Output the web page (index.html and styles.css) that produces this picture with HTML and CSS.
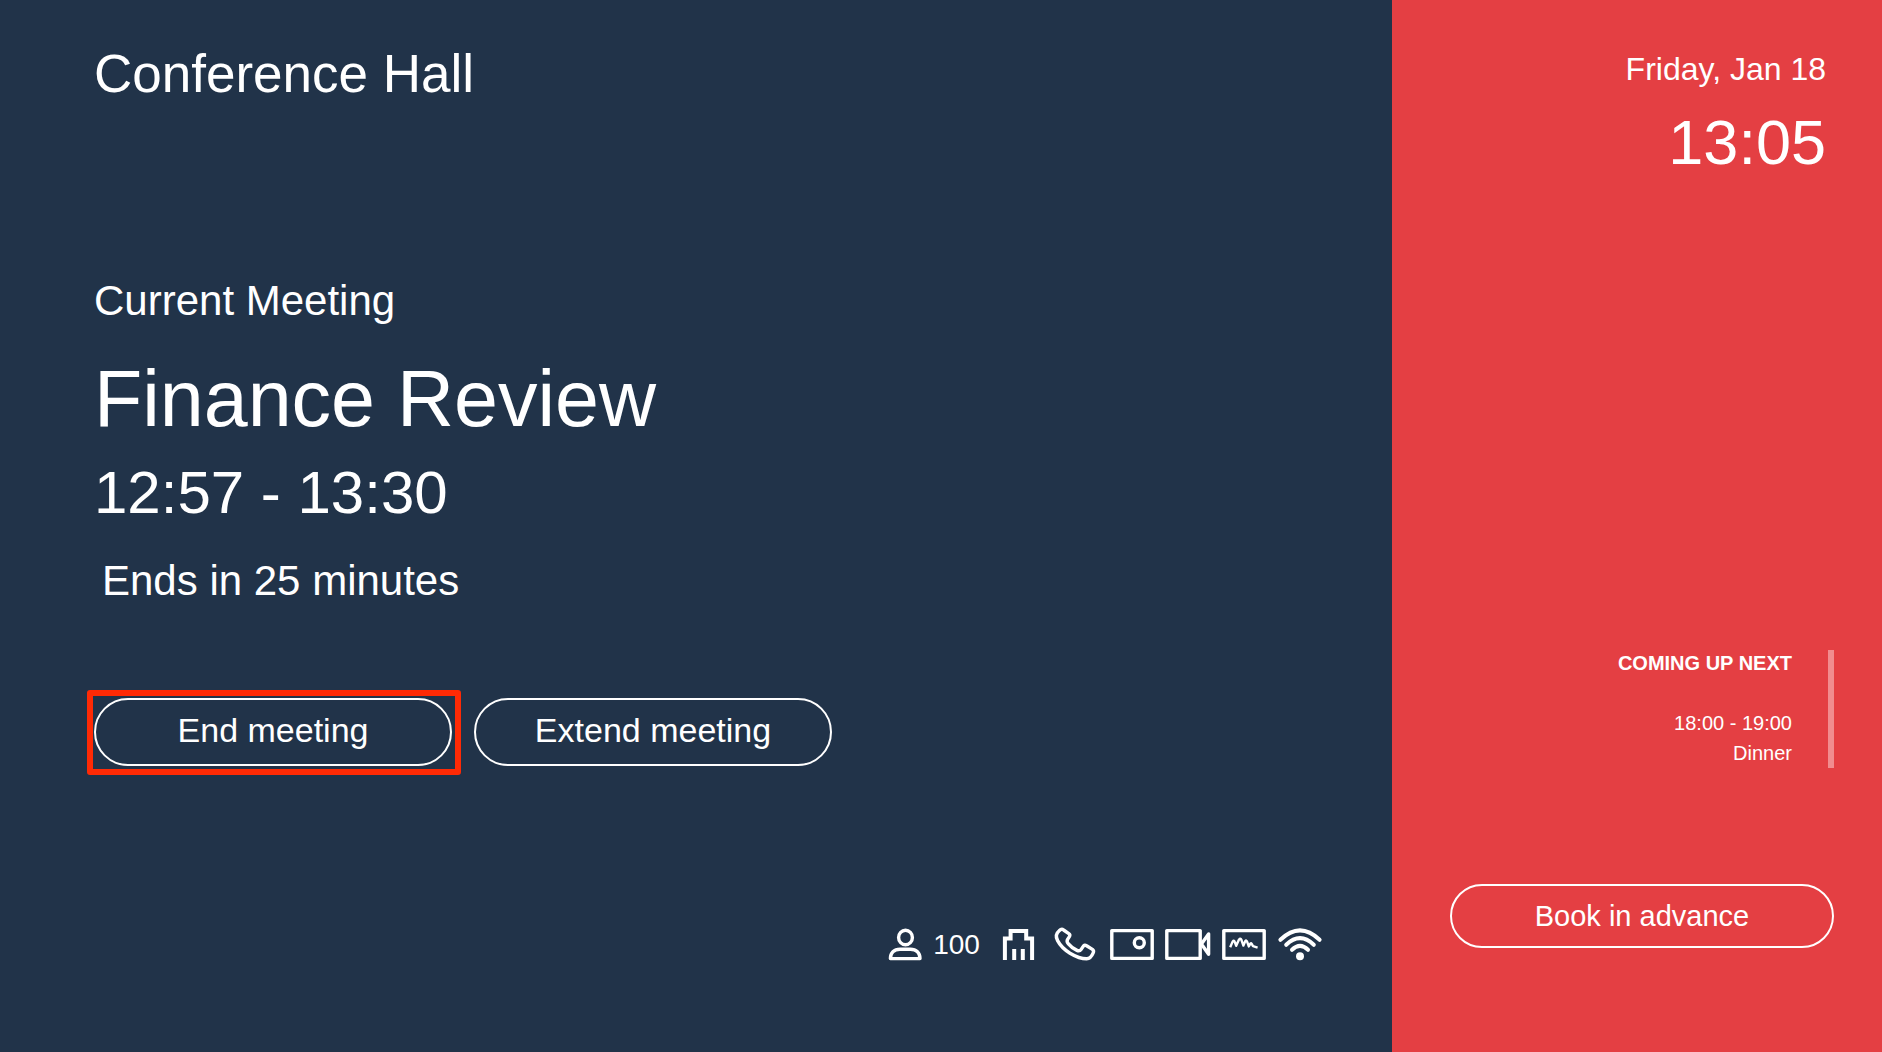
FILE: index.html
```html
<!DOCTYPE html>
<html lang="en">
<head>
    <meta charset="UTF-8">
    <meta name="viewport" content="width=device-width, initial-scale=1.0">
    <title>Conference Hall</title>
    <link rel="stylesheet" href="styles.css">
</head>
<body>
    <div class="display">
        <main class="room">
            <h1 class="room-name">Conference Hall</h1>

            <section class="meeting">
                <p class="meeting-label">Current Meeting</p>
                <h2 class="meeting-title">Finance Review</h2>
                <p class="meeting-time">12:57 - 13:30</p>
                <p class="meeting-left">Ends in 25 minutes</p>
                <div class="actions">
                    <button type="button" class="button highlighted">End meeting</button>
                    <button type="button" class="button">Extend meeting</button>
                </div>
            </section>

            <ul class="equipment">
                <li class="capacity">
                    <svg class="icon" width="34" height="32" viewBox="0 0 34 32">
                        <ellipse cx="17.5" cy="8.5" rx="6.9" ry="7.3"/>
                        <path d="M2.4 29.6C2.4 24 6 20.2 12 20.2H22.4C28.4 20.2 32 24 32 29.6Z"/>
                    </svg>
                    <span>100</span>
                </li>
                <li>
                    <svg class="icon" width="50" height="32" viewBox="0 0 50 32">
                        <path class="thick" d="M13.9 31V9.5H19.6V1.9H35.2V9.5H41.1V31M23.2 20V31M31.8 20V31"/>
                    </svg>
                </li>
                <li>
                    <svg class="icon" width="47" height="32" viewBox="0 0 47 32">
                        <path d="M7.2 1.8Q9.5 -.6 11.6 1L16.8 4.6Q18.6 5.8 17.4 7.6L15.6 10.4Q14.4 12.6 16.2 14.6Q19.6 18.8 25 21.4Q27.6 22.6 29 20.6L31.2 17.4Q32.6 15.4 34.6 16.8L40.4 20.4Q42.2 21.8 41.2 23.8Q38.8 29.6 34.6 29.8Q27.4 29.8 18 24.2Q9.4 18.8 5.6 11.6Q2.4 5.8 7.2 1.8Z"/>
                    </svg>
                </li>
                <li>
                    <svg class="icon" width="44" height="32" viewBox="0 0 44 32">
                        <rect x="1.8" y="1.6" width="40.4" height="27.8"/>
                        <circle cx="29.3" cy="13.7" r="5"/>
                    </svg>
                </li>
                <li>
                    <svg class="icon" width="46" height="32" viewBox="0 0 46 32">
                        <rect x="1.8" y="1.6" width="33.4" height="27.8"/>
                        <path d="M36.4 15L43.6 5V25.2Z"/>
                    </svg>
                </li>
                <li>
                    <svg class="icon" width="45" height="32" viewBox="0 0 45 32">
                        <rect x="1.8" y="1.6" width="40.4" height="27.8"/>
                        <path class="thin" d="M8.2 18.2L10.6 12.6Q12 10.6 12.8 13L14.2 16.8L17 10.6Q18.4 8.6 19.4 10.8L21.4 16.6L23.2 12.2Q24.4 10.6 25.2 12.8L26.8 17.4L28.4 14.6Q29.4 13.6 30 15.4L31 17.2L35.6 18.6"/>
                    </svg>
                </li>
                <li>
                    <svg class="icon" width="44" height="32" viewBox="0 0 44 32">
                        <path class="wave" d="M2.4 10.8Q22 -8 41.6 10.8M8.2 15.8Q22 2.6 35.8 15.8M14 20.8Q22 13 30 20.8"/>
                        <circle class="dot" cx="22" cy="27.2" r="4"/>
                    </svg>
                </li>
            </ul>
        </main>

        <aside class="sidebar">
            <div class="clock">
                <p class="date">Friday, Jan 18</p>
                <p class="time">13:05</p>
            </div>

            <section class="next">
                <h3>COMING UP NEXT</h3>
                <p>18:00 - 19:00</p>
                <p>Dinner</p>
            </section>

            <button type="button" class="button book">Book in advance</button>
        </aside>
    </div>
</body>
</html>
```
FILE: styles.css
```css
* {
    margin: 0;
    padding: 0;
    box-sizing: border-box;
}
body {
    font-family: "Liberation Sans", Arial, sans-serif;
    color: #fff;
}
h1, h2 {
    font-weight: normal;
}
.display {
    display: grid;
    grid-template-columns: 71fr 25fr;
    min-height: 100vh;
}

/* Left side */
.room {
    display: flex;
    flex-direction: column;
    padding: 44px 70px 91px 94px;
    background-color: #213349;
}
.room-name {
    font-size: 53px;
    line-height: 60px;
}
.meeting {
    margin-top: 172px;
}
.meeting-label,
.meeting-left {
    font-size: 42px;
    line-height: 50px;
}
.meeting-title {
    margin-top: 28px;
    font-size: 79px;
    line-height: 90px;
}
.meeting-time {
    margin-top: 14px;
    font-size: 60px;
    line-height: 70px;
}
.meeting-left {
    margin-top: 28px;
    padding-left: 8px;
}
.actions {
    display: flex;
    gap: 22px;
    margin-top: 92px;
}
.button {
    position: relative;
    width: 358px;
    height: 68px;
    padding-bottom: 3px;
    border: 2px solid #fff;
    border-radius: 34px;
    background: none;
    color: #fff;
    font-family: inherit;
    font-size: 34px;
    cursor: pointer;
}
.highlighted::after {
    content: "";
    position: absolute;
    inset: -10px -11px -11px -9px;
    border: 6px solid #ff2a05;
    border-radius: 3px;
}

/* Equipment icons */
.equipment {
    display: flex;
    justify-content: flex-end;
    gap: 11px;
    margin-top: auto;
    list-style: none;
}
.capacity {
    display: flex;
    gap: 11px;
    font-size: 28px;
    line-height: 32px;
}
.icon {
    display: block;
    overflow: visible;
    fill: none;
    stroke: #fff;
    stroke-width: 3.4;
    stroke-linejoin: round;
}
.icon .thick {
    stroke-width: 4;
    stroke-linejoin: miter;
}
.icon .thin {
    stroke-width: 2.4;
}
.icon .wave {
    stroke-width: 4;
    stroke-linecap: round;
}
.icon .dot {
    fill: #fff;
    stroke: none;
}

/* Right side */
.sidebar {
    display: flex;
    flex-direction: column;
    padding: 49px 48px 104px 58px;
    background-color: #e43f43;
    text-align: right;
}
.clock {
    padding-right: 8px;
}
.date {
    font-size: 32px;
    line-height: 40px;
}
.time {
    margin-top: 13px;
    font-size: 63px;
    line-height: 80px;
}
.next {
    margin-top: auto;
    padding-right: 36px;
    border-right: 6px solid #f18c8f;
    font-size: 20px;
    line-height: 30px;
}
.next h3 {
    margin-bottom: 32px;
    font-size: 20px;
    line-height: 26px;
}
.book {
    width: 100%;
    height: 64px;
    margin-top: 116px;
    padding-bottom: 0;
    font-size: 29px;
}
```
